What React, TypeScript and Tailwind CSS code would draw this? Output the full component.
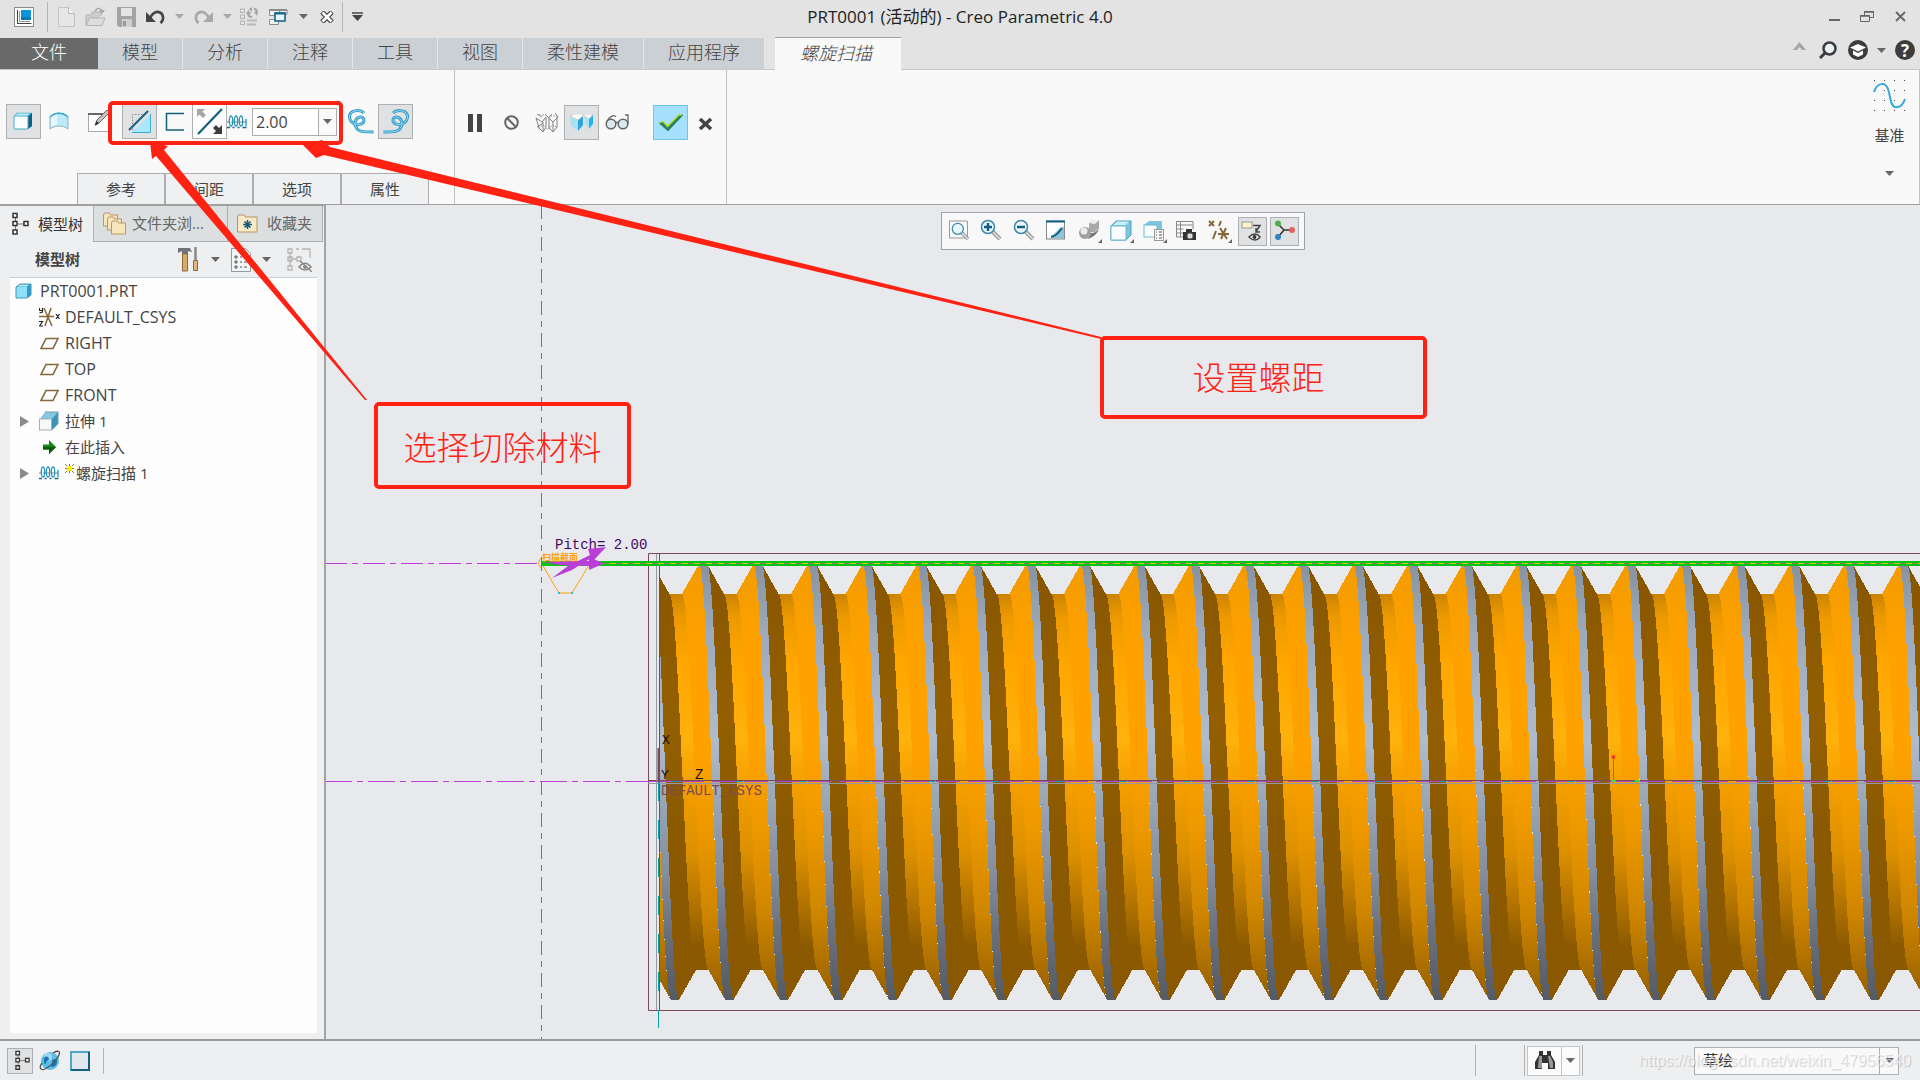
import { useState, type ReactNode } from "react";
import clsx from "clsx";

const UI_FONT = "font-['Open_Sans','Noto_Sans_CJK_SC',sans-serif]";

/* ---------- small building blocks ---------- */

function Svg({ w, h, children, className }: { w: number; h: number; children: ReactNode; className?: string }) {
  return (
    <svg width={w} height={h} viewBox={`0 0 ${w} ${h}`} fill="none" aria-hidden="true" className={clsx("shrink-0", className)}>
      {children}
    </svg>
  );
}

function Caret({ color = "#666" }: { color?: string }) {
  return (
    <Svg w={9} h={5}>
      <path d="M0 0h9L4.500 5z" fill={color} />
    </Svg>
  );
}

function IconButton({ label, className, children }: { label: string; className?: string; children: ReactNode }) {
  return (
    <button type="button" aria-label={label} title={label} className={clsx("flex shrink-0 items-center justify-center", className)}>
      {children}
    </button>
  );
}

/* ---------- icons ---------- */

const AppIcon = () => (
  <Svg w={20} h={20}>
    <rect x=".5" y=".5" width="19" height="19" fill="#fff" stroke="#8a8a8a" />
    <path d="M3.500 3v14M3.500 16.500h14" stroke="#444" />
    <path d="M5.500 4v10.500H16" stroke="#999" />
    <rect x="7" y="3" width="10" height="10" fill="#0c95dc" />
    <path d="M7 10h10v3H7z" fill="#047ab8" />
  </Svg>
);

const NewIcon = () => (
  <Svg w={17} h={20}>
    <path d="M.5.5h10l6 6v13H.5z" fill="#e6e6e6" stroke="#c4c4c4" />
    <path d="M10.500.5v6h6" fill="#f2f2f2" stroke="#bbb" />
  </Svg>
);

const OpenIcon = () => (
  <Svg w={20} h={20}>
    <path d="M1 18V8h5l1-3h9v4" fill="#ccc" stroke="#b4b4b4" />
    <path d="M1 18.500 5 11h15l-3 7.500z" fill="#ddd" stroke="#b4b4b4" />
    <path d="M10 4c3-4 6-3 7 0" stroke="#a6a6a6" strokeWidth="1.500" />
    <path d="M14 3h6l-3 4z" fill="#a6a6a6" />
  </Svg>
);

const SaveIcon = () => (
  <Svg w={19} h={20}>
    <path d="M0 0h19v20H2l-2-2z" fill="#a3a3a3" />
    <path d="M4 1h11v8H4z" fill="#e4e4e4" />
    <path d="M5 12h10v8H5z" fill="#cfcfcf" />
    <path d="M6 14h3v5H6z" fill="#999" />
  </Svg>
);

const UndoIcon = ({ color }: { color: string }) => (
  <Svg w={20} h={14}>
    <path d="M4 9C6 2 11 1 14 2.500c4 2 4 8 .5 10.500" stroke={color} strokeWidth="2.600" />
    <path d="M0 2v10h10z" fill={color} />
  </Svg>
);

const RedoIcon = ({ color }: { color: string }) => (
  <Svg w={20} h={14}>
    <path d="M16 9C14 2 9 1 6 2.500 2 4.500 2 10.500 5.500 13" stroke={color} strokeWidth="2.600" />
    <path d="M20 2v10H10z" fill={color} />
  </Svg>
);

const RegenIcon = () => (
  <Svg w={18} h={19}>
    {[2, 8, 14].map((y) => (
      <rect key={y} x=".5" y={y} width="4" height="3.500" stroke="#b5b5b5" />
    ))}
    <path d="M7 13.500h10M7 17.500h9" stroke="#b9b9b9" strokeWidth="2" />
    <path d="M8 6c0 3 2 4 4 4M17 6c0-3-1-4-3-4" stroke="#a3a3a3" strokeWidth="2" />
    <path d="m6 7 2.500-4L11 7zM14 5l3 4 1-5zM12 0v5L9 2z" fill="#a3a3a3" />
  </Svg>
);

const WindowsIcon = () => (
  <Svg w={19} h={18}>
    <path d="M.5 1.500h10v6H.5zM.5 11.500h9v5H.5zM10 1.500h8v5h-3" fill="#f4f4f4" stroke="#8c8c8c" />
    <path d="M0 2h10M11 2h7" stroke="#8c8c8c" strokeWidth="2" />
    <rect x="6" y="5" width="10" height="8" fill="#e8f6fc" stroke="#17688a" strokeWidth="1.600" />
    <path d="M5.500 5.500h11" stroke="#17688a" strokeWidth="2" />
  </Svg>
);

const CloseWindowIcon = () => (
  <Svg w={14} h={12}>
    <path d="M2 1l10 10M12 1 2 11" stroke="#444" strokeWidth="5" />
    <path d="M2.500 1.500l9 9M11.500 1.500l-9 9" stroke="#fff" strokeWidth="2.600" />
  </Svg>
);

const MoreIcon = () => (
  <Svg w={11} h={9}>
    <path d="M0 1h11" stroke="#444" strokeWidth="1.500" />
    <path d="M0 3h11L5.500 9z" fill="#444" />
  </Svg>
);

const SolidIcon = () => (
  <Svg w={20} h={18}>
    <path d="M1 4 4 .8h15V14l-4 3z" fill="#3bb3d9" />
    <path d="M15 4.500 19 1v13l-4 3z" fill="#11607f" />
    <rect x="1" y="4" width="14" height="13" rx="1" fill="#fbfdfe" stroke="#45aacb" />
    <path d="M2 3.500 5 1.500h12l-2.500 2z" fill="#c9effa" />
  </Svg>
);

const SurfaceIcon = () => (
  <Svg w={20} h={18}>
    <path d="M1 5C6 0 14 0 19 5v12c-5-4-13-4-18 0z" fill="#bdeafa" stroke="#8fb4c0" />
    <path d="M2 5c2-2 4-3 6-3v11c-2 0-4 1-6 2z" fill="#e9f8fd" />
    <path d="M1 5C6 0 14 0 19 5" stroke="#31a5cd" strokeWidth="1.500" />
  </Svg>
);

const SketchIcon = () => (
  <Svg w={22} h={23}>
    <rect x=".5" y="3.500" width="20" height="18" fill="#fff" stroke="#aaa" />
    <path d="M0 4h18" stroke="#666" strokeWidth="2" />
    <path d="m7 15 2-5L19 0l3 2L11 13z" fill="#c8c2ba" stroke="#666" />
    <path d="m7 16 1.500-5 2.500 2z" fill="#333" />
  </Svg>
);

const CutIcon = () => (
  <Svg w={24} h={24}>
    <path d="M4.500 20V4.500H19" stroke="#888" strokeDasharray="1.500 1.500" />
    <path d="M22 5v17H4z" fill="#aae8ff" />
    <path d="M22.500 4v18.500H4" stroke="#3bacd0" />
    <path d="M1 20 20 1" stroke="#155f80" strokeWidth="2" />
  </Svg>
);

const ThinIcon = () => (
  <Svg w={19} h={20}>
    <path d="M19 1.500H1.500V18H19" stroke="#155f80" strokeWidth="1.500" />
  </Svg>
);

const FlipIcon = () => (
  <Svg w={27} h={27}>
    <path d="M2 26 26 1" stroke="#155f80" strokeWidth="2.200" />
    <path d="M1 1h8L6.500 3.500 10 7 7 10 3.500 6.500 1 9z" fill="#a5a5a5" />
    <path d="M26 26h-9l3-3-3-3 3-3 3 3 3-3z" fill="#3d3d3d" />
  </Svg>
);

const SpringIcon = () => (
  <Svg w={20} h={14}>
    <path d="M0 7h20" stroke="#888" strokeDasharray="3 1" />
    {[4, 9, 14].map((x) => (
      <ellipse key={x} cx={x} cy="6" rx="1.700" ry="5" stroke="#2393b8" strokeWidth="1.300" />
    ))}
    <path d="M0 12.500h3M5.500 12.500h2M10.500 12.500h2M15.500 12.500h4" stroke="#16678a" strokeWidth="1.500" />
    <path d="M19 4v7" stroke="#2393b8" strokeWidth="1.300" />
  </Svg>
);

const HELIX = "M16 4C12 0 1 1 1.500 8c.5 6 7 9 11.500 7 5-2 3-8-1-7-5 1-6 7-4 10 2 5 7 5 17.500 5";

const HelixIcon = ({ flip = false }: { flip?: boolean }) => (
  <Svg w={26} h={26} className={flip ? "-scale-x-100" : ""}>
    <path d={HELIX} stroke="#2f9ac6" strokeWidth="3" />
    <path d={HELIX} stroke="#9adcf2" />
  </Svg>
);

const WireIcon = () => (
  <Svg w={24} h={20}>
    <path
      d="M1 5l6 4 4-5M1 5l3 10 4 4 3-5V4M8 9v10M2 1l5 3M13 4l5 5 5-5M14 4v11l4 4 4-5V4M18 9v10M10 1l4 4M2 14l6-4M17 1l-3 3M20 0l3 4"
      stroke="#808080"
    />
    <path d="M4 2h7M15 3h7M3 15l5-3 4 4 6-4 5 3" stroke="#999" strokeDasharray="2 1" />
  </Svg>
);

const PreviewIcon = () => (
  <Svg w={24} h={18}>
    <path d="m0 2 8 4v11l-7-5z" fill="#a9e2f6" />
    <path d="m8 6 5-4v9l-5 6z" fill="#2ba6d6" />
    <path d="m0 2 4-2h9v2L8 6z" fill="#fafafa" stroke="#bbb" strokeWidth=".5" />
    <path d="m14 2 5 3v9l-4-4z" fill="#a9e2f6" />
    <path d="m19 5 4-4v9l-4 5z" fill="#27b5ea" />
    <path d="M14 0h9l-4 5-5-3z" fill="#f4f4f4" stroke="#bbb" strokeWidth=".5" />
  </Svg>
);

const GlassesIcon = () => (
  <Svg w={24} h={16}>
    <circle cx="6" cy="10" r="4.800" fill="#dce8ef" stroke="#666" strokeWidth="1.500" />
    <circle cx="18" cy="10" r="4.800" fill="#dce8ef" stroke="#666" strokeWidth="1.500" />
    <path d="M11 9c1-1 2-1 3 0M1.500 8C5 2 9 0 11 3M23 10V1h-3" stroke="#666" strokeWidth="1.300" />
  </Svg>
);

const CheckIcon = () => (
  <Svg w={25} h={18}>
    <path d="m1 9 4-1 5 5L21 1h4L10 17z" fill="#23865a" stroke="#1c5c3c" strokeWidth=".5" />
    <path d="m1 9 4-1.500 4.500 5L21 1h3" stroke="#b6dc1c" strokeWidth="1.300" />
  </Svg>
);

const DatumIcon = () => (
  <Svg w={33} h={33}>
    {[1, 11, 21, 31].map((y) => [1, 11, 21, 31].map((x) => <rect key={`${x}-${y}`} x={x} y={y} width="1" height="1" fill="#444" />))}
    <path d="M1 13C4 4 12 2 15 10c3 9 2 16 7 18 5 1 8-2 10-8" stroke="#3aa9da" strokeWidth="2" />
  </Svg>
);

const TreeIcon = ({ w = 17, h = 24 }: { w?: number; h?: number }) => (
  <svg width={w} height={h} viewBox="0 0 17 24" fill="none" aria-hidden="true">
    <path d="M3.500 6v12M6 12h6" stroke="#777" />
    <path d="M1 1.500h4v4H1zM1 9.500h4v4H1zM1 18h4v4H1zM12 9.500h4v4h-4z" fill="#fff" stroke="#333" strokeWidth="1.500" />
  </svg>
);

const FoldersIcon = () => (
  <Svg w={24} h={24}>
    {[0, 4, 8].map((o) => (
      <path key={o} d={`M${o + 0.5} ${o + 14}V${o + 3}l1-2h5l1 2h7v11h-14z`} fill="#f8e5bb" stroke="#b5976a" />
    ))}
  </Svg>
);

const FavoritesIcon = () => (
  <Svg w={21} h={19}>
    <path d="M.5 18V3l1-2h6l1 2h11.500v15z" fill="#f9e9c6" stroke="#b39465" />
    <path d="M10.500 6v9M6 10.500h9M7.500 7.500l6 6M13.500 7.500l-6 6" stroke="#165d7f" strokeWidth="1.500" />
  </Svg>
);

const HammerIcon = () => (
  <Svg w={21} h={25}>
    <path d="M0 1h12l2 4-4-1v3H4V4L0 6z" fill="#707478" />
    <path d="M4.500 7h5v17h-5z" fill="#d8ad69" stroke="#8f6a38" />
    <path d="M17.500 0v14" stroke="#888" strokeWidth="2.500" />
    <path d="M15.500 13.500h4v10h-4z" fill="#e1b877" stroke="#8f6a38" />
  </Svg>
);

const ListIcon = () => (
  <Svg w={20} h={24}>
    <path d="M.5.5h14l5 5v18H.5z" fill="#f3f5f6" stroke="#8e9aa3" />
    {[9, 14, 19].map((y) => (
      <path key={y} d={`M4 ${y - 1}h2v2H4zM9 ${y}h2M13 ${y}h3`} stroke="#555" />
    ))}
  </Svg>
);

const HiddenTreeIcon = () => (
  <Svg w={25} h={24}>
    <path d="M1 1h4v4H1zM1 9h4v4H1zM1 18h4v4H1zM10 9h4v4h-4zM3 5v13M5 11h5M9 1h3M15 1h8v9" stroke="#b5b5b5" strokeWidth="1.300" />
    <path d="M12 19c4-5 8-5 12 0-4 4-8 4-12 0z" stroke="#888" strokeWidth="1.500" />
    <circle cx="18" cy="19" r="2" fill="#888" />
    <path d="m13 13 12 11" stroke="#888" strokeWidth="1.300" />
  </Svg>
);

const PartIcon = () => (
  <Svg w={17} h={16}>
    <path d="m1 4 4-3h11v11l-4 3H1z" fill="#2a9dc8" />
    <rect x="1" y="4" width="11" height="11" fill="#8fe0fb" />
    <path d="m2 3.500 3-2h9l-2 2z" fill="#c6f0fc" />
    <path d="m1 4 4-3h11v11l-4 3H1z" stroke="#4a96b0" />
  </Svg>
);

const CsysIcon = () => (
  <Svg w={21} h={20}>
    <path d="M0 9.500h15M5 1l8 18M12 1 6 19" stroke="#84683a" strokeWidth="1.500" />
    <path d="M.5 1v2.500h3M3.500 1v4L.5 6M17 7l3.500 5M20.500 7 17 12M0 14.500h3.500L.5 19H4" stroke="#222" strokeWidth="1.200" />
  </Svg>
);

const PlaneIcon = () => (
  <Svg w={19} h={13}>
    <path d="M6 1.500h12l-5 10H1z" stroke="#84683a" strokeWidth="1.600" />
  </Svg>
);

const ExtrudeIcon = () => (
  <Svg w={20} h={20}>
    <path d="M1 8 6 1h13v12l-6 6z" fill="#86c6df" />
    <path d="m13 8 6-7v12l-6 6z" fill="#3b93b6" />
    <rect x=".5" y="8" width="12" height="11" fill="#f7f8f9" stroke="#a6adb3" />
    <path d="M6 1h13v12" stroke="#6c9fb3" />
  </Svg>
);

const InsertIcon = () => (
  <Svg w={13} h={14}>
    <path d="M0 4.500h6V0l7 7-7 7V9.500H0z" fill="#128a12" />
    <path d="M0 7h13l-7 7V9.500H0z" fill="#0a5c0a" />
  </Svg>
);

const Expander = () => (
  <Svg w={9} h={11}>
    <path d="M0 0v11l9-5.500z" fill="#8a8a8a" />
  </Svg>
);

const Spark = () => (
  <Svg w={9} h={9}>
    <path d="m0 0 9 9M9 0 0 9M4.500 0v9M0 4.500h9" stroke="#8f8400" />
    <rect x="2" y="2" width="5" height="5" fill="#fff200" />
  </Svg>
);

/* ---------- view toolbar ---------- */

const Corner = () => <path d="M24 20v4h-4z" fill="#666" />;

const lens = (
  <>
    <path d="m13 13 7 7" stroke="#9a9a9a" strokeWidth="4" />
    <path d="m13 13 7 7" stroke="#e6e6e6" strokeWidth="1.500" />
    <circle cx="8" cy="8" r="6.500" fill="#eaf8fe" stroke="#3a87a8" strokeWidth="1.500" />
  </>
);

const VIEW_TOOLS: { label: string; pressed?: boolean; icon: ReactNode }[] = [
  {
    label: "重新调整",
    icon: (
      <>
        <path d="M1 2h18M1.500 2v17h18V2" stroke="#999" />
        <g transform="translate(3 3) scale(.85)">{lens}</g>
      </>
    ),
  },
  { label: "放大", icon: <>{lens}<path d="M8 4v8M4 8h8" stroke="#155f80" strokeWidth="2.500" /></> },
  { label: "缩小", icon: <>{lens}<path d="M4 8h8" stroke="#155f80" strokeWidth="2.500" /></> },
  {
    label: "重画",
    icon: (
      <>
        <rect x="1.500" y="2" width="18" height="18" fill="#bfe6f3" stroke="#888" />
        <path d="M2 3h17v4C14 8 9 13 7 19H2z" fill="#fff" />
        <path d="M8 18 19 8v11H8z" fill="#8fc3d6" />
        <path d="M6 18c5-1 7-4 11-9M1 2.500h19" stroke="#155f80" strokeWidth="2" />
      </>
    ),
  },
  {
    label: "渲染选项",
    icon: (
      <>
        <path d="M11 4l3-3h7v8l-4 4h-6z" fill="#a8a8a8" />
        <path d="M11 4l3-3h7l-4 4z" fill="#eee" />
        <path d="M10 20c5-2 10-5 11-11-2 4-5 5-8 5z" fill="#777" />
        <circle cx="7" cy="14" r="6" fill="#a0a0a0" />
        <circle cx="6" cy="12" r="3.500" fill="#ebebeb" />
        <Corner />
      </>
    ),
  },
  {
    label: "显示样式",
    icon: (
      <>
        <path d="m1 7 5-5h15v14l-5 5H1z" fill="#7cc6df" stroke="#4a9fbd" />
        <rect x="1" y="7" width="15" height="14" fill="#fafdfe" stroke="#6cb8d2" />
        <path d="m3 6 4-3.500h12L16 6z" fill="#c9edf8" />
        <Corner />
      </>
    ),
  },
  {
    label: "已保存方向",
    icon: (
      <>
        <path d="m1 6 5-4h13v12l-4 4H1z" fill="#7cc6df" />
        <rect x="1" y="6" width="13" height="12" fill="#fafdfe" stroke="#6cb8d2" />
        <rect x="11.500" y="10.500" width="9" height="11" fill="#f6f6f6" stroke="#999" />
        <path d="M13 13h1M16 13h3M13 16h1M16 16h3M13 19h1M16 19h3" stroke="#555" />
        <Corner />
      </>
    ),
  },
  {
    label: "视图管理器",
    icon: (
      <>
        <path d="M1.500 2v16h7M1.500 6h16M1.500 10h7M1.500 14h7M5.500 2v16M1 2.500h17v8" stroke="#888" />
        <rect x="8" y="13" width="13" height="8" fill="#333" />
        <path d="M11 10h6v3h-6z" fill="#333" />
        <circle cx="15" cy="17" r="3" fill="#ddd" stroke="#666" />
      </>
    ),
  },
  {
    label: "基准显示过滤器",
    icon: (
      <>
        <path d="m1 2 5 5M6 2 1 7M13 2l-2 5M8 12l-3 8M10 15h11M12 9l7 11M18 9l-5 11" stroke="#84683a" strokeWidth="2" />
        <Corner />
      </>
    ),
  },
  {
    label: "注释显示",
    pressed: true,
    icon: (
      <>
        <rect x="2" y="3" width="10" height="6" fill="#fff1cb" stroke="#999" />
        <path d="M13 6.500h7l-4 6M16 9v4h4" stroke="#444" strokeWidth="1.500" />
        <path d="M9 18c4-4 8-4 11 0-3 4-7 4-11 0z" fill="#fff" stroke="#444" strokeWidth="1.500" />
        <circle cx="14.500" cy="18" r="2" fill="#333" />
      </>
    ),
  },
  {
    label: "旋转中心",
    pressed: true,
    icon: (
      <>
        <path d="M5 5l6 6-6 7M11 11h8" stroke="#333" strokeWidth="1.500" />
        <circle cx="5" cy="4.500" r="3" fill="#4fae4a" />
        <circle cx="5" cy="18" r="3" fill="#2f86b8" />
        <circle cx="19" cy="11" r="3" fill="#e2605c" />
      </>
    ),
  },
];

function ViewToolbar() {
  return (
    <div className="absolute top-[7px] left-1/2 flex h-[38px] w-[364px] -translate-x-1/2 items-center justify-between border border-[#a0a3a6] bg-[#f8f8f8] pr-[5px] pl-[3px]">
      {VIEW_TOOLS.map((tool) => (
        <IconButton
          key={tool.label}
          label={tool.label}
          className={clsx("size-[29px] border", tool.pressed ? "border-[#adb0b2] bg-[#dfe1e3]" : "border-transparent")}
        >
          <Svg w={24} h={24}>{tool.icon}</Svg>
        </IconButton>
      ))}
    </div>
  );
}

/* ---------- model ---------- */

const AXIS_Y = 782;
const PITCH = 54.55;
const CREST_R = 218;
const ROOT_R = 188;

// Points of a helix edge seen from the side; it advances half a pitch from top to bottom.
function helix(x0: number, r: number) {
  return Array.from({ length: 25 }, (_, i) => {
    const t = (i / 24) * Math.PI;
    return `${(x0 + (26.5 * t) / Math.PI).toFixed(1)},${(AXIS_Y - r * Math.cos(t)).toFixed(1)}`;
  });
}

function band(left: string[], right: string[]) {
  return [...left, ...[...right].reverse()].join(" ");
}

const crestLeft = helix(699, CREST_R);
const crestRight = helix(707, CREST_R);
const rootLeft = helix(724, ROOT_R);
const rootRight = helix(736.5, ROOT_R);
const nextCrest = helix(699 + PITCH, CREST_R);

function Stops({ list }: { list: [number, string][] }) {
  return (
    <>
      {list.map(([offset, color]) => (
        <stop key={offset} offset={offset} stopColor={color} />
      ))}
    </>
  );
}

function ModelView() {
  const grad = { gradientUnits: "userSpaceOnUse" as const, x1: 0, x2: 0, y1: 564, y2: 1000 };
  return (
    <svg viewBox="326 205 1594 834" preserveAspectRatio="xMinYMin slice" className="absolute inset-0 size-full" role="img" aria-label="PRT0001">
      <defs>
        <linearGradient id="crestFill" {...grad}>
          <Stops list={[[0, "#8793a2"], [0.15, "#9ba9ba"], [0.4, "#aebccd"], [0.55, "#98a5b5"], [0.7, "#858f9d"], [0.85, "#68707c"], [1, "#555a63"]]} />
        </linearGradient>
        <linearGradient id="flankFill" {...grad}>
          <Stops list={[[0, "#f39b00"], [0.2, "#ffa200"], [0.42, "#ffa200"], [0.6, "#ee9900"], [0.8, "#cf8600"], [1, "#945f00"]]} />
        </linearGradient>
        <linearGradient id="rootFill" {...grad}>
          <Stops list={[[0.07, "#cc8500"], [0.12, "#ec9900"], [0.22, "#ffa500"], [0.4, "#ffb10c"], [0.52, "#f29d00"], [0.66, "#dd9000"], [0.78, "#b37300"], [0.88, "#8a5900"]]} />
        </linearGradient>
        <linearGradient id="shadeFill" {...grad}>
          <Stops list={[[0, "#865600"], [0.35, "#945f00"], [0.6, "#8b5a00"], [1, "#895800"]]} />
        </linearGradient>
        <clipPath id="threadClip">
          <rect x="659" y="560" width="4000" height="445" />
        </clipPath>
      </defs>

      <path d="M4000 553.500H648.500V1010.500H4000" fill="none" stroke="#7b4b55" />

      <g clipPath="url(#threadClip)" shapeRendering="crispEdges">
        {Array.from({ length: 27 }, (_, i) => (
          <g key={i} transform={`translate(${((i - 2) * PITCH).toFixed(2)} 0)`}>
            <polygon points={band(rootRight, nextCrest)} fill="url(#flankFill)" />
            <polygon points={band(crestRight, rootLeft)} fill="url(#shadeFill)" />
            <polygon points={band(rootLeft, rootRight)} fill="url(#rootFill)" />
            <polygon points={band(crestLeft, crestRight)} fill="url(#crestFill)" />
          </g>
        ))}
      </g>

      <g fill="none">
        <path d="M659.500 554v456M648 780.500h3300" stroke="#7b4b55" />
        <path d="M656.500 554v456M648 783.500h3300" stroke="#979aa5" />
        <path d="M658.500 782v228" stroke="#00a5a5" strokeDasharray="19 19" />
        <path d="M658.500 1010v18" stroke="#00a5a5" />
        <path d="M541.500 205v834" stroke="#ba3fd8" strokeDasharray="14 6 6 6" />
        <path d="M325 563.500h216" stroke="#ba3fd8" strokeDasharray="22 5 6 5" />
        <path d="M325 781.500h323" stroke="#ba3fd8" strokeDasharray="27 5 6 5" />
        <path d="M648 781.500h3300" stroke="#b247c0" strokeDasharray="24 8" />
        <path d="M672 781.500h3300" stroke="#1c9f96" strokeDasharray="7 57" />
        <path d="M541 563.500h3400" stroke="#05c414" strokeWidth="5" />
        <path d="M604 563.500h3300" stroke="#8a7560" strokeDasharray="6 6" />
        <path d="M610 563.500h3300" stroke="#c7d40c" strokeDasharray="6 6" />
        <path d="m543 566 16 27h13l17-28" stroke="#ffa200" />
        <path d="M541 558l-3 5 3 5" stroke="#ffa200" />
        <path d="M1613.500 757v24" stroke="#b5653a" />
        <path d="M658.500 748v34" stroke="#7b4b55" strokeWidth="2" />
      </g>
      <path d="M558 592h2v2h-2zM571 592h2v2h-2z" fill="#1ec3e0" />
      <circle cx="1613.500" cy="757" r="2" fill="#ee3b24" />
      <path d="M1611 781h5M1635 781h5" stroke="#2fe02f" strokeWidth="2" />
      <text x="542" y="561" fontSize="9" fontWeight="700" fill="#ffa200" className="font-['Noto_Sans_CJK_SC',sans-serif]">扫描截面</text>
      <g className="font-['Liberation_Mono',monospace]">
        <text x="555" y="549" fontSize="14" fill="#3b0a66">Pitch= 2.00</text>
        <text x="662" y="744" fontSize="13" fill="#111">X</text>
        <text x="661" y="779" fontSize="13" fill="#111">Y</text>
        <text x="695" y="779" fontSize="14" fill="#111">Z</text>
        <text x="661" y="795" fontSize="14" fill="#7b4b55">DEFAULT_CSYS</text>
      </g>
      <g fill="#ba3fd8">
        <path d="M552 578 568 566 590 555 588 549 606 547 594 560 591 558 572 570Z" />
        <path d="M543 562 589 561 589 557 604 563.500 589 570 589 566 560 565Z" />
      </g>
    </svg>
  );
}

/* ---------- window chrome ---------- */

function TitleBar() {
  return (
    <header className="relative flex h-[37px] items-center bg-[#e3e3e3]">
      <div className="flex h-full items-center pb-1">
        <IconButton label="Creo" className="ml-2 w-8"><AppIcon /></IconButton>
        <span className="mr-1 ml-[7px] h-[30px] w-px bg-[#b5b5b5]" />
        <IconButton label="新建" className="w-7"><NewIcon /></IconButton>
        <IconButton label="打开" className="w-[30px]"><OpenIcon /></IconButton>
        <IconButton label="保存" className="w-8"><SaveIcon /></IconButton>
        <IconButton label="撤消" className="w-7"><UndoIcon color="#444" /></IconButton>
        <IconButton label="撤消列表" className="w-[18px]"><Caret color="#a8a8a8" /></IconButton>
        <IconButton label="重做" className="w-[30px]"><RedoIcon color="#a8a8a8" /></IconButton>
        <IconButton label="重做列表" className="w-[18px]"><Caret color="#a8a8a8" /></IconButton>
        <IconButton label="重新生成" className="w-[26px]"><RegenIcon /></IconButton>
        <IconButton label="窗口" className="w-8"><WindowsIcon /></IconButton>
        <IconButton label="窗口列表" className="w-[18px]"><Caret /></IconButton>
        <IconButton label="关闭窗口" className="w-[30px]"><CloseWindowIcon /></IconButton>
        <span className="h-[30px] w-px bg-[#b5b5b5]" />
        <IconButton label="自定义快速访问工具栏" className="w-7"><MoreIcon /></IconButton>
      </div>
      <h1 className="absolute left-1/2 -translate-x-1/2 pb-1 text-[17px] whitespace-nowrap text-[#222]">
        PRT0001 (活动的) - Creo Parametric 4.0
      </h1>
      <div className="ml-auto flex h-full items-center pb-1">
        <IconButton label="最小化" className="w-8">
          <Svg w={11} h={12}><path d="M0 9h11" stroke="#666" strokeWidth="2" /></Svg>
        </IconButton>
        <IconButton label="还原" className="w-[34px]">
          <Svg w={14} h={12}>
            <path d="M4.500 4V.5h9v6H10M.5 4.500h9v6h-9z" stroke="#666" />
            <path d="M4 1h10M0 5h10" stroke="#666" strokeWidth="1.500" />
          </Svg>
        </IconButton>
        <IconButton label="关闭" className="mr-[3px] w-[33px]">
          <Svg w={11} h={11}><path d="m1 1 9 9M10 1l-9 9" stroke="#666" strokeWidth="1.800" /></Svg>
        </IconButton>
      </div>
    </header>
  );
}

const TABS = ["模型", "分析", "注释", "工具", "视图", "柔性建模", "应用程序"];

function RibbonTabs() {
  return (
    <div className="flex h-[33px] items-stretch border-b border-[#c8c8c8] bg-[#e3e3e3] text-[18px] leading-none font-light text-[#444]">
      <button type="button" className="mt-px w-[98px] bg-[#696969] pb-[3px] text-white">文件</button>
      {TABS.map((tab) => (
        <button
          key={tab}
          type="button"
          className={clsx("mt-px border-r border-[#e6e6e6] bg-[#cbd0d4] pb-[3px]", tab.length === 2 ? "w-[85px]" : "w-[121px]")}
        >
          {tab}
        </button>
      ))}
      <button type="button" className="-mb-px ml-[10px] w-[126px] border-t border-[#a0a0a0] bg-[#f9f9f9] pr-1 pb-[3px] italic">螺旋扫描</button>
      <div className="ml-auto flex items-center pb-[6px]">
        <IconButton label="最小化功能区" className="w-[34px] pb-2">
          <Svg w={13} h={8}><path d="M0 8 6.500 0 13 8H9L6.500 5 4 8z" fill="#a5a5a5" /></Svg>
        </IconButton>
        <IconButton label="搜索" className="w-6">
          <Svg w={18} h={18}>
            <circle cx="10.500" cy="7.500" r="6" fill="#e9f3f7" stroke="#3c3c3c" strokeWidth="2.500" />
            <path d="m6 12-5 5" stroke="#3c3c3c" strokeWidth="3" />
          </Svg>
        </IconButton>
        <IconButton label="学习中心" className="w-9">
          <Svg w={20} h={20}>
            <circle cx="10" cy="10" r="10" fill="#3c3c3c" />
            <path d="m10 4 8 3.500-8 4-8-4z" fill="#fff" />
            <path d="M5 10.500v4l5 2.500 5-2.500v-4l-5 2.500z" fill="#fff" />
          </Svg>
        </IconButton>
        <IconButton label="学习中心列表" className="w-[10px]"><Caret /></IconButton>
        <IconButton label="帮助" className="mr-[4px] ml-[8px] w-[22px]">
          <span className="flex size-5 items-center justify-center rounded-full bg-[#3c3c3c] text-[17px] leading-none font-bold text-white">?</span>
        </IconButton>
      </div>
    </div>
  );
}

function Ribbon() {
  const [pitch, setPitch] = useState("2.00");
  return (
    <section className="flex h-[135px] border-b border-[#a0a0a0] bg-[#f9f9f9] text-[15px] text-[#444]">
      <div className="flex w-[455px] flex-col justify-between border-r border-[#c2c2c2]">
        <div className="mt-[34px] ml-1.5 flex h-[35px] items-center">
          <IconButton label="实体" className="size-[35px] border border-[#adb0b2] bg-[#dfe1e3] pr-px pb-px"><SolidIcon /></IconButton>
          <IconButton label="曲面" className="size-[35px] pb-px"><SurfaceIcon /></IconButton>
          <IconButton label="草绘" className="h-[35px] w-[46px]"><SketchIcon /></IconButton>
          <IconButton label="移除材料" className="size-[35px] border border-[#adb0b2] bg-[#dfe1e3]"><CutIcon /></IconButton>
          <IconButton label="薄壁" className="size-[35px]"><ThinIcon /></IconButton>
          <IconButton label="反向" className="size-[35px] border border-[#adb0b2] bg-[#fdfdfd]"><FlipIcon /></IconButton>
          <label className="flex items-center" aria-label="螺距">
            <SpringIcon />
            <input
              value={pitch}
              onChange={(e) => setPitch(e.target.value)}
              className="ml-[5px] h-7 w-[66px] border border-r-0 border-[#adadad] bg-white px-[3px] text-[16px] outline-none"
            />
          </label>
          <IconButton label="螺距列表" className="mr-1 h-7 w-[19px] border border-[#adadad] bg-[#f9f9f9]"><Caret /></IconButton>
          <IconButton label="左手定则" className="ml-0.5 size-[35px]"><HelixIcon /></IconButton>
          <IconButton label="右手定则" className="size-[35px] border border-[#adb0b2] bg-[#dfe1e3]"><HelixIcon flip /></IconButton>
        </div>
        <div className="ml-[77px] flex h-[31px]">
          {["参考", "间距", "选项", "属性"].map((name) => (
            <button key={name} type="button" className="w-[88px] border border-b-0 border-[#adadad] bg-[#eef0f1]">
              {name}
            </button>
          ))}
        </div>
      </div>
      <div className="w-[272px] border-r border-[#c2c2c2] pt-[35px] pl-[3px]">
        <div className="flex items-center">
          <IconButton label="暂停" className="size-[35px] pr-0.5">
            <Svg w={14} h={18}><path d="M0 0h5v18H0zM9 0h5v18H9z" fill="#444" /></Svg>
          </IconButton>
          <IconButton label="无预览" className="h-[35px] w-9">
            <Svg w={15} h={15}>
              <circle cx="7.500" cy="7.500" r="6.300" stroke="#666" strokeWidth="2" />
              <path d="m3 3 9 9" stroke="#666" strokeWidth="2" />
            </Svg>
          </IconButton>
          <IconButton label="分离" className="size-[35px]"><WireIcon /></IconButton>
          <IconButton label="连接" className="size-[35px] border border-[#adb0b2] bg-[#dfe1e3]"><PreviewIcon /></IconButton>
          <IconButton label="验证" className="size-[35px] pb-0.5"><GlassesIcon /></IconButton>
          <IconButton label="确定" className="ml-[19px] size-[35px] border border-[#70c4ef] bg-[#a6e0ff]"><CheckIcon /></IconButton>
          <IconButton label="取消" className="size-[35px] pt-0.5">
            <Svg w={15} h={12}><path d="M2 1l11 10M13 1 2 11" stroke="#444" strokeWidth="3.500" /></Svg>
          </IconButton>
        </div>
      </div>
      <div className="ml-auto flex w-[60px] border-r border-[#c2c2c2]">
        <button type="button" className="flex w-full flex-col items-center pt-[9px]">
          <DatumIcon />
          <span className="mt-3 leading-[22px]">基准</span>
          <span className="mt-[25px]"><Caret /></span>
        </button>
      </div>
    </section>
  );
}

const TREE: { name: string; icon: ReactNode; latin?: boolean; expandable?: boolean; spark?: boolean }[] = [
  { name: "DEFAULT_CSYS", icon: <CsysIcon />, latin: true },
  { name: "RIGHT", icon: <PlaneIcon />, latin: true },
  { name: "TOP", icon: <PlaneIcon />, latin: true },
  { name: "FRONT", icon: <PlaneIcon />, latin: true },
  { name: "拉伸 1", icon: <ExtrudeIcon />, expandable: true },
  { name: "在此插入", icon: <InsertIcon /> },
  { name: "螺旋扫描 1", icon: <SpringIcon />, expandable: true, spark: true },
];

function Navigator() {
  return (
    <aside className="flex w-[326px] shrink-0 flex-col border-t border-r-2 border-t-[#a0a0a0] border-r-[#a0a3a6] bg-[#eeeff1] text-[15px] text-[#444]">
      <div className="flex h-[36px]">
        <button type="button" className="flex w-[93px] items-center gap-[9px] pl-3 text-[#333]">
          <TreeIcon />
          模型树
        </button>
        <button type="button" className="flex w-[135px] items-center gap-[5px] border border-t-0 border-[#adb0b2] bg-[#dcdfdf] pl-[9px] text-[#666]">
          <FoldersIcon />
          文件夹浏...
        </button>
        <button type="button" className="flex w-[95px] items-center gap-[9px] border-r border-b border-[#adb0b2] bg-[#dcdfdf] pl-[9px] text-[#666]">
          <FavoritesIcon />
          收藏夹
        </button>
      </div>
      <div className="flex h-[35px] items-center pl-[35px]">
        <span className="w-[142px] font-bold">模型树</span>
        <IconButton label="设置" className="w-[23px]"><HammerIcon /></IconButton>
        <IconButton label="设置列表" className="w-[31px]"><Caret /></IconButton>
        <IconButton label="显示" className="w-[20px]"><ListIcon /></IconButton>
        <IconButton label="显示列表" className="w-[31px]"><Caret /></IconButton>
        <IconButton label="隐藏树" className="ml-[4px] w-[26px]"><HiddenTreeIcon /></IconButton>
      </div>
      <ul className="mr-[7px] mb-1.5 ml-[10px] flex-1 border-t border-[#cdd0d2] bg-[#fdfdfd] text-[15px] leading-[26px]">
        <li className="flex h-[26px] items-center gap-2 pl-[5px] text-[16px]">
          <PartIcon />
          PRT0001.PRT
        </li>
        {TREE.map((node) => (
          <li key={node.name} className={clsx("flex h-[26px] items-center pl-[10px]", node.latin && "text-[16px]")}>
            <span className="w-[18px]">{node.expandable && <Expander />}</span>
            <span className="flex w-[22px] justify-center">{node.icon}</span>
            <span className="ml-[5px] flex">
              {node.spark && <span className="mt-1 mr-[2px]"><Spark /></span>}
              {node.name}
            </span>
          </li>
        ))}
      </ul>
    </aside>
  );
}

function StatusBar() {
  return (
    <footer className="relative flex h-[41px] items-center border-t-2 border-[#9a9a9a] bg-[#eeeff1] text-[#333]">
      <IconButton label="导航器" className="ml-[7px] size-[26px] border border-[#adb0b2] bg-[#dfe1e3] pl-1"><TreeIcon w={15} h={21} /></IconButton>
      <IconButton label="浏览器" className="ml-1 w-[26px]">
        <Svg w={22} h={22}>
          <circle cx="11" cy="11" r="9" fill="#5bbce8" />
          <circle cx="9" cy="7" r="4" fill="#9fdcf5" />
          <path d="M5 8c2-3 5-1 5 1s-3 1-3 4-3 0-2-5zM13 10c3-2 5-1 5 2s-3 5-5 5 1-4 0-7z" fill="#1c76ad" />
          <path d="M14 3c4-3 8-2 6 2-2 5-9 12-14 14-5 2-6-2-3-6" stroke="#555" strokeWidth="1.300" />
        </Svg>
      </IconButton>
      <IconButton label="全屏" className="ml-1 w-[26px]">
        <Svg w={20} h={20}>
          <rect x="1" y="1" width="18" height="18" fill="#e2e9ee" stroke="#4ba7c8" strokeWidth="2" />
          <path d="M19 1v18H1" stroke="#145f7e" strokeWidth="2" />
        </Svg>
      </IconButton>
      <span className="ml-[10px] h-[26px] w-px bg-[#b0b3b5]" />
      <div className="ml-auto flex items-center">
        <span className="h-[31px] w-px bg-[#b0b3b5]" />
        <span className="ml-12 h-[31px] w-px bg-[#b0b3b5]" />
        <div className="mx-0.5 flex h-[30px] border border-[#c3c6c8] bg-[#fbfbfb]">
          <IconButton label="查找" className="w-[33px]">
            <Svg w={20} h={19}>
              <path d="M4 0h4v4h4V0h4v4l4 7v7h-7v-6h-6v6H0v-7l4-7z" fill="#333" />
              <path d="M4 5h3v12H3zM13 5h2l3 6v6h-3z" fill="#999" />
            </Svg>
          </IconButton>
          <IconButton label="查找列表" className="w-[18px] border-l border-[#c3c6c8]"><Caret /></IconButton>
        </div>
        <span className="h-[31px] w-px bg-[#b0b3b5]" />
        <div className="relative mr-[21px] ml-[111px]">
          <select aria-label="选择过滤器" className="h-7 w-[205px] appearance-none border border-[#adb0b2] bg-[#f9f9f9] pl-2 text-[15px]">
            <option>草绘</option>
          </select>
          <span className="pointer-events-none absolute inset-y-0 right-0 flex w-5 items-center justify-center border-l border-[#adb0b2]">
            <Caret />
          </span>
        </div>
      </div>
      <span className="pointer-events-none absolute right-[9px] text-[16px] whitespace-nowrap text-white/60 [text-shadow:1px_1px_1px_rgba(0,0,0,0.18)] font-['Liberation_Sans',sans-serif]">
        https://blog.csdn.net/weixin_47956540
      </span>
    </footer>
  );
}

/* ---------- red call-outs drawn over the window ---------- */

function Callouts() {
  const box = "absolute flex items-center justify-center rounded-[5px] border-4 border-[#ff2112] text-[33px] leading-none font-light text-[#ff2112]";
  return (
    <div className="pointer-events-none absolute inset-0 overflow-hidden">
      <div className="absolute top-[101px] left-[108px] h-[44px] w-[235px] rounded-[5px] border-4 border-[#ff2112]" />
      <svg className="absolute inset-0 size-full" fill="#ff2112" aria-hidden="true">
        <path d="M150 142 168 146 164 150 367 400 365 400 156 156 152 159Z" />
        <path d="M303 145 322 140 330 147 1101 337 1101 339 324 155 316 158Z" />
      </svg>
      <p className={clsx(box, "top-[402px] left-[374px] h-[87px] w-[257px] pt-[3px]")}>选择切除材料</p>
      <p className={clsx(box, "top-[336px] left-[1100px] h-[83px] w-[327px] pr-[10px]")}>设置螺距</p>
    </div>
  );
}

export default function App() {
  return (
    <div className={clsx("relative flex h-screen flex-col overflow-hidden bg-[#e8e9ed]", UI_FONT)}>
      <TitleBar />
      <RibbonTabs />
      <Ribbon />
      <main className="flex min-h-0 flex-1">
        <Navigator />
        <section className="relative flex-1 overflow-hidden bg-[#e8e9ed]">
          <ModelView />
          <ViewToolbar />
        </section>
      </main>
      <StatusBar />
      <Callouts />
    </div>
  );
}
